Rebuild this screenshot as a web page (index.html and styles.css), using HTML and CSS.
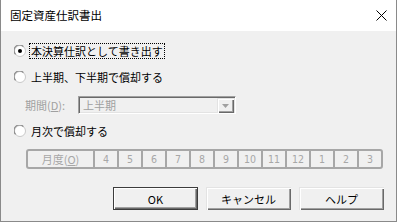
FILE: index.html
```html
<!DOCTYPE html>
<html lang="ja">
<head>
<meta charset="utf-8">
<link rel="stylesheet" href="styles.css">
</head>
<body>
<div class="window">
  <div class="titlebar">
    <span class="title">固定資産仕訳書出</span>
    <svg class="close" width="11" height="11" viewBox="0 0 11 11"><path d="M0.5 0.5 L10.5 10.5 M10.5 0.5 L0.5 10.5" stroke="#000" stroke-width="1" fill="none"/></svg>
  </div>
  <div class="content">
    <div class="row r1">
      <svg class="radio" width="12" height="12" viewBox="0 0 12 12">
        <circle cx="6" cy="6" r="5.5" fill="#fff" stroke="#c8c8c8"/>
        <path d="M1.6 9.4 A5 5 0 0 1 9.4 1.6" stroke="#8a8a8a" fill="none" stroke-width="1.2"/>
        <circle cx="6" cy="6" r="2" fill="#000"/>
      </svg>
      <span class="label focus">本決算仕訳として書き出す</span>
    </div>
    <div class="row r2">
      <svg class="radio" width="12" height="12" viewBox="0 0 12 12">
        <circle cx="6" cy="6" r="5.5" fill="#fff" stroke="#c8c8c8"/>
        <path d="M1.6 9.4 A5 5 0 0 1 9.4 1.6" stroke="#8a8a8a" fill="none" stroke-width="1.2"/>
      </svg>
      <span class="label">上半期、下半期で償却する</span>
    </div>
    <div class="row period">
      <span class="plabel">期間(<u>D</u>):</span>
      <div class="combo">
        <span class="cval">上半期</span>
        <span class="cbtn"><svg width="7" height="4" viewBox="0 0 7 4"><path d="M0 0 H7 L3.5 4 Z" fill="#a0a0a0"/></svg></span>
      </div>
    </div>
    <div class="row r3">
      <svg class="radio" width="12" height="12" viewBox="0 0 12 12">
        <circle cx="6" cy="6" r="5.5" fill="#fff" stroke="#c8c8c8"/>
        <path d="M1.6 9.4 A5 5 0 0 1 9.4 1.6" stroke="#8a8a8a" fill="none" stroke-width="1.2"/>
      </svg>
      <span class="label">月次で償却する</span>
    </div>
    <div class="months">
      <span class="mlabel">月度(<u>O</u>)</span>
      <span class="m">4</span><span class="m">5</span><span class="m">6</span><span class="m">7</span>
      <span class="m">8</span><span class="m">9</span><span class="m">10</span><span class="m">11</span>
      <span class="m">12</span><span class="m">1</span><span class="m">2</span><span class="m">3</span>
    </div>
    <div class="buttons">
      <button class="btn default">OK</button>
      <button class="btn">キャンセル</button>
      <button class="btn">ヘルプ</button>
    </div>
  </div>
</div>
</body>
</html>
```
FILE: styles.css
```css
* { box-sizing: border-box; }
html, body { margin: 0; padding: 0; }
body {
  width: 397px;
  height: 222px;
  overflow: hidden;
  font-family: "Noto Sans CJK JP", "Noto Sans", sans-serif;
  font-size: 11px;
  color: #000;
  background: #fff;
}
.window {
  width: 397px;
  height: 222px;
  border: 1px solid #8a8a8a;
  border-top: none;
  display: flex;
  flex-direction: column;
}
.titlebar {
  height: 31px;
  background: #fff;
  display: flex;
  align-items: center;
  justify-content: space-between;
  padding: 0 9px 0 9px;
}
.title {
  font-size: 11.5px;
  line-height: 31px;
  padding-bottom: 1px;
}
.close { display: block; margin-right: 0; margin-top: 0; }
.content {
  flex: 1;
  background: #f0f0f0;
  display: flex;
  flex-direction: column;
  padding: 12px 12px 0 13px;
}
.row {
  display: flex;
  align-items: center;
  height: 16px;
}
.r2 { margin-top: 10px; }
.r3 { margin-top: 9px; }
.radio { display: block; flex: none; }
.label {
  margin-left: 3px;
  line-height: 14px;
  padding: 0 1px;
  border: 1px solid transparent;
  white-space: nowrap;
}
.focus { border: 1px dotted #000; }
.period {
  margin-top: 11px;
  height: 18px;
  padding-left: 11px;
}
.plabel {
  width: 53px;
  color: #a0a0a0;
  line-height: 18px;
}
.combo {
  width: 158px;
  height: 18px;
  display: flex;
  align-items: center;
  justify-content: space-between;
  background: #f0f0f0;
  border-top: 1px solid #a0a0a0;
  border-left: 1px solid #a0a0a0;
  border-right: 1px solid #fff;
  border-bottom: 1px solid #fff;
  box-shadow: inset 1px 1px 0 #696969, inset -1px -1px 0 #e3e3e3;
  padding: 1px 1px 1px 1px;
}
.cval {
  color: #a0a0a0;
  padding-left: 3px;
  line-height: 14px;
}
.cbtn {
  width: 17px;
  height: 15px;
  display: flex;
  align-items: center;
  justify-content: center;
  background: #f0f0f0;
  box-shadow: inset 1px 1px 0 #e3e3e3, inset 2px 2px 0 #fff, inset -1px -1px 0 #696969, inset -2px -2px 0 #a0a0a0;
}
.cbtn svg { display: block; margin-top: 1px; }
.months {
  margin-top: 10px;
  margin-left: 12px;
  width: 357px;
  height: 20px;
  border: 2px solid #a7a7a7;
  border-radius: 3px;
  display: flex;
  color: #a7a7a7;
  font-size: 11px;
}
.mlabel {
  width: 65px;
  text-align: center;
  line-height: 16px;
}
.m {
  width: 24px;
  border-left: 2px solid #a7a7a7;
  text-align: center;
  line-height: 16px;
  font-family: "DejaVu Sans", sans-serif;
  font-stretch: condensed;
  font-size: 10.5px;
  transform-origin: center;
}
.buttons {
  margin-top: 18px;
  display: flex;
  justify-content: flex-end;
  gap: 8px;
}
.btn {
  width: 85px;
  height: 23px;
  margin: 0;
  padding: 0;
  font-family: "Noto Sans CJK JP", "Noto Sans", sans-serif;
  font-size: 11px;
  color: #000;
  background: #f0f0f0;
  border: none;
  box-shadow: inset 1px 1px 0 #e3e3e3, inset 2px 2px 0 #fff, inset -1px -1px 0 #696969, inset -2px -2px 0 #a0a0a0;
}
.btn.default {
  border: 1px solid #3c3c3c;
  box-shadow: inset 1px 1px 0 #fff, inset -1px -1px 0 #696969, inset -2px -2px 0 #a0a0a0;
}
```
